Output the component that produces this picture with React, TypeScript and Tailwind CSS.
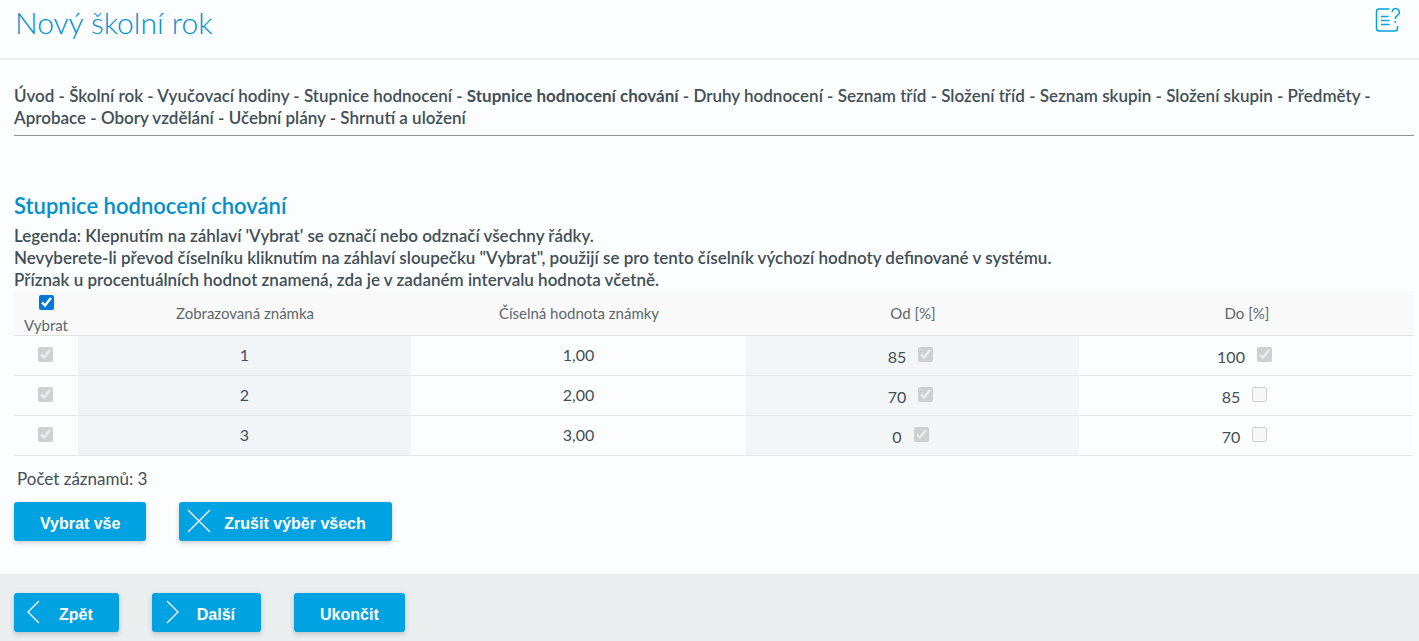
import type { ReactNode } from 'react';

interface GradeRow {
  grade: string;
  value: string;
  from: number;
  fromIncluded: boolean;
  to: number;
  toIncluded: boolean;
}

const steps = [
  'Úvod',
  'Školní rok',
  'Vyučovací hodiny',
  'Stupnice hodnocení',
  'Stupnice hodnocení chování',
  'Druhy hodnocení',
  'Seznam tříd',
  'Složení tříd',
  'Seznam skupin',
  'Složení skupin',
  'Předměty',
  'Aprobace',
  'Obory vzdělání',
  'Učební plány',
  'Shrnutí a uložení',
];

const activeStep = 4;

const rows: GradeRow[] = [
  { grade: '1', value: '1,00', from: 85, fromIncluded: true, to: 100, toIncluded: true },
  { grade: '2', value: '2,00', from: 70, fromIncluded: true, to: 85, toIncluded: false },
  { grade: '3', value: '3,00', from: 0, fromIncluded: true, to: 70, toIncluded: false },
];

const cell = 'h-10 p-0 pb-0.5 text-center align-middle border-b border-b-[#e3e5e6] border-r border-r-white';

interface ButtonProps {
  children: ReactNode;
  icon?: ReactNode;
}

const Button: React.FC<ButtonProps> = ({ children, icon }) => (
  <button
    type="button"
    className={`flex h-[39px] items-center rounded-[3px] bg-[#00a2e2] pt-1 pr-[26px] font-['Liberation_Sans',Arial,sans-serif] text-base leading-5 font-bold text-white shadow-[0_2px_5px_rgba(0,0,0,0.2)] ${
      icon ? 'pl-[7px]' : 'pl-[26px]'
    }`}
  >
    {icon && <span className="-mt-1.5 mr-3 block w-[26px]">{icon}</span>}
    {children}
  </button>
);

const Line = ({ d }: { d: string }) => (
  <svg width="26" height="26" viewBox="0 0 26 26" fill="none" stroke="white" strokeWidth="1.3" aria-hidden="true">
    <path d={d} />
  </svg>
);

interface LimitProps {
  label: string;
  value: number;
  included: boolean;
}

const Limit: React.FC<LimitProps> = ({ label, value, included }) => (
  <div className="flex items-center justify-center gap-3 pr-1">
    <span className="pt-1">{value}</span>
    <input type="checkbox" aria-label={label} checked={included} disabled readOnly className="size-[15px]" />
  </div>
);

const App: React.FC = () => {
  return (
    <div className="bg-[#fcfdfe] font-['Lato',sans-serif] text-[17px] leading-[22px] text-[#414f57]">
      <header className="flex h-[60px] items-start justify-between border-b-2 border-[#ebeef0] pr-[18px] pl-[15px]">
        <h1 className="pt-0.5 text-[30px] leading-10 font-light text-[#0090d0]">Nový školní rok</h1>
        <a href="#napoveda" aria-label="Nápověda" className="mt-[7px]">
          <svg width="26" height="26" viewBox="0 0 26 26" fill="none" stroke="#00a2e2" strokeWidth="1.5" aria-hidden="true">
            <path d="M14.500 2H4a2.500 2.500 0 0 0-2.500 2.500V21.500a2.500 2.500 0 0 0 2.500 2.500H20a2.500 2.500 0 0 0 2.500-2.500V19" />
            <path d="M6 9.500h7.500M6 13.500h8.500M6 17.500h8.500" />
            <path d="M17.200 5a3.600 3.600 0 1 1 5.800 2.900c-1.600 1.200-2.700 2.100-2.700 4.100M20.300 14v2" />
          </svg>
        </a>
      </header>

      <main className="pt-[25px] pr-[5px] pb-[33px] pl-[14px]">
        <nav className="border-b border-[#8f9598] pb-1.5 font-semibold">
          {steps.map((step, i) => (
            <span key={step}>
              <a href={`#krok-${i + 1}`} className={i === activeStep ? 'font-bold' : ''}>
                {step}
              </a>
              {i < steps.length - 1 && ' - '}
            </span>
          ))}
        </nav>

        <h2 className="mt-14 text-[22px] leading-7 font-semibold text-[#008fcc]">Stupnice hodnocení chování</h2>
        <p className="mt-[5px] font-semibold">
          Legenda: Klepnutím na záhlaví 'Vybrat' se označí nebo odznačí všechny řádky.
          <br />
          Nevyberete-li převod číselníku kliknutím na záhlaví sloupečku "Vybrat", použijí se pro tento číselník výchozí
          hodnoty definované v systému.
          <br />
          Příznak u procentuálních hodnot znamená, zda je v zadaném intervalu hodnota včetně.
        </p>

        <table className="w-full table-fixed border-separate border-spacing-0">
          <thead>
            <tr className="h-[45px] bg-[#f9f9f9] text-[15px] text-[#5c676d] [&>th]:border-b [&>th]:border-[#dfe2e3] [&>th]:p-0 [&>th]:font-normal">
              <th className="w-16">
                <label className="flex flex-col items-center gap-[5px] pt-[3px]">
                  <input type="checkbox" defaultChecked className="size-[15px] accent-[#0078d7]" />
                  <span className="leading-5">Vybrat</span>
                </label>
              </th>
              <th>Zobrazovaná známka</th>
              <th>Číselná hodnota známky</th>
              <th>Od [%]</th>
              <th>Do [%]</th>
            </tr>
          </thead>
          <tbody className="text-base">
            {rows.map((row) => (
              <tr key={row.grade}>
                <td className={cell}>
                  <input
                    type="checkbox"
                    aria-label={`Vybrat ${row.grade}`}
                    checked
                    disabled
                    readOnly
                    className="mx-auto block size-[15px]"
                  />
                </td>
                <td className={`${cell} bg-[#f0f4f7]`}>{row.grade}</td>
                <td className={cell}>{row.value}</td>
                <td className={`${cell} bg-[#f3f5f7]`}>
                  <Limit label="Od včetně" value={row.from} included={row.fromIncluded} />
                </td>
                <td className={cell}>
                  <Limit label="Do včetně" value={row.to} included={row.toIncluded} />
                </td>
              </tr>
            ))}
          </tbody>
        </table>

        <p className="mt-3 pl-[3px]">Počet záznamů: 3</p>
        <div className="mt-3 flex gap-[33px]">
          <Button>Vybrat vše</Button>
          <Button icon={<Line d="M2 2l22 22M24 2L2 24" />}>Zrušit výběr všech</Button>
        </div>
      </main>

      <footer className="flex gap-[33px] bg-[#ebeeef] pt-[19px] pb-[9px] pl-[14px]">
        <Button icon={<Line d="M18 2L7 13l11 11" />}>Zpět</Button>
        <Button icon={<Line d="M8 2l11 11L8 24" />}>Další</Button>
        <Button>Ukončit</Button>
      </footer>
    </div>
  );
};

export default App;
